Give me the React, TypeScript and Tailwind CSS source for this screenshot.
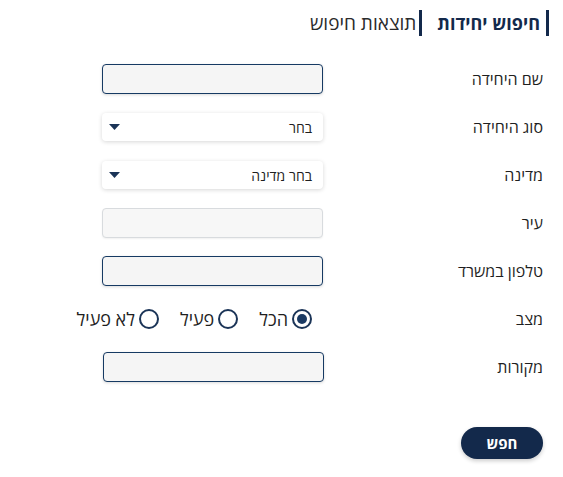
import React from 'react';

const inputCls =
  'h-[30px] w-[221px] rounded-[4px] border border-[#163a63] bg-[#f5f5f5] shadow-[0_1px_3px_rgba(0,0,0,0.15)] outline-none';

const Field: React.FC<{ label: string; children: React.ReactNode }> = ({ label, children }) => (
  <div className="grid h-[48px] grid-cols-[220px_1fr] items-center">
    <span className="text-[16px] text-[#1f1f1f]">{label}</span>
    <div className="flex items-center">{children}</div>
  </div>
);

const Select: React.FC<{ text: string }> = ({ text }) => (
  <div className="flex h-[28px] w-[221px] items-center justify-between rounded-[4px] bg-white pe-[7px] ps-[11px] shadow-[0_1px_4px_rgba(0,0,0,0.16)]">
    <span className="text-[14px] text-[#1f1f1f]">{text}</span>
    <svg width="11" height="6" viewBox="0 0 11 6">
      <path d="M0 0h11L5.5 6z" fill="#1b3457" />
    </svg>
  </div>
);

const Radio: React.FC<{ label: string; checked?: boolean }> = ({ label, checked }) => (
  <label className="flex items-center gap-[4px]">
    <span className="flex h-[20px] w-[20px] items-center justify-center rounded-full border-2 border-[#1b3457] bg-white">
      {checked && <span className="h-[10px] w-[10px] rounded-full bg-[#1b3a63]" />}
    </span>
    <span className="text-[18px] leading-[24px] text-[#1f1f1f]">{label}</span>
  </label>
);

export default function App() {
  return (
    <div
      dir="rtl"
      className="min-h-[477px] w-full bg-white pr-[14px]"
      style={{ fontFamily: '"Open Sans", "DejaVu Sans", sans-serif' }}
    >
      <div className="flex items-center gap-[15px] pt-[10px]">
        <div className="border-s-[3px] border-[#13294b] ps-[6px] text-[18px] font-bold leading-[26px] text-[#13294b]">
          חיפוש יחידות
        </div>
        <div className="border-s-[3px] border-[#13294b] ps-[3px] text-[19px] leading-[26px] text-[#2b2b2b]">
          תוצאות חיפוש
        </div>
      </div>

      <div className="mt-[19px] pr-[6px]">
        <Field label="שם היחידה">
          <input className={inputCls} />
        </Field>
        <Field label="סוג היחידה">
          <Select text="בחר" />
        </Field>
        <Field label="מדינה">
          <Select text="בחר מדינה" />
        </Field>
        <Field label="עיר">
          <input
            disabled
            className="h-[30px] w-[221px] rounded-[4px] border border-[#d8dbde] bg-[#f7f7f7] shadow-[0_1px_2px_rgba(0,0,0,0.06)]"
          />
        </Field>
        <Field label="טלפון במשרד">
          <input className={inputCls} />
        </Field>
        <Field label="מצב">
          <div className="flex items-center gap-[21px] pr-[11px]">
            <Radio label="הכל" checked />
            <Radio label="פעיל" />
            <Radio label="לא פעיל" />
          </div>
        </Field>
        <Field label="מקורות">
          <input className={inputCls + ' mr-[-1px]'} />
        </Field>

        <button className="mt-[36px] h-[32px] w-[82px] rounded-full bg-[#13294b] text-[15px] font-bold text-white shadow-[0_2px_4px_rgba(0,0,0,0.2)]">
          חפש
        </button>
      </div>
    </div>
  );
}
